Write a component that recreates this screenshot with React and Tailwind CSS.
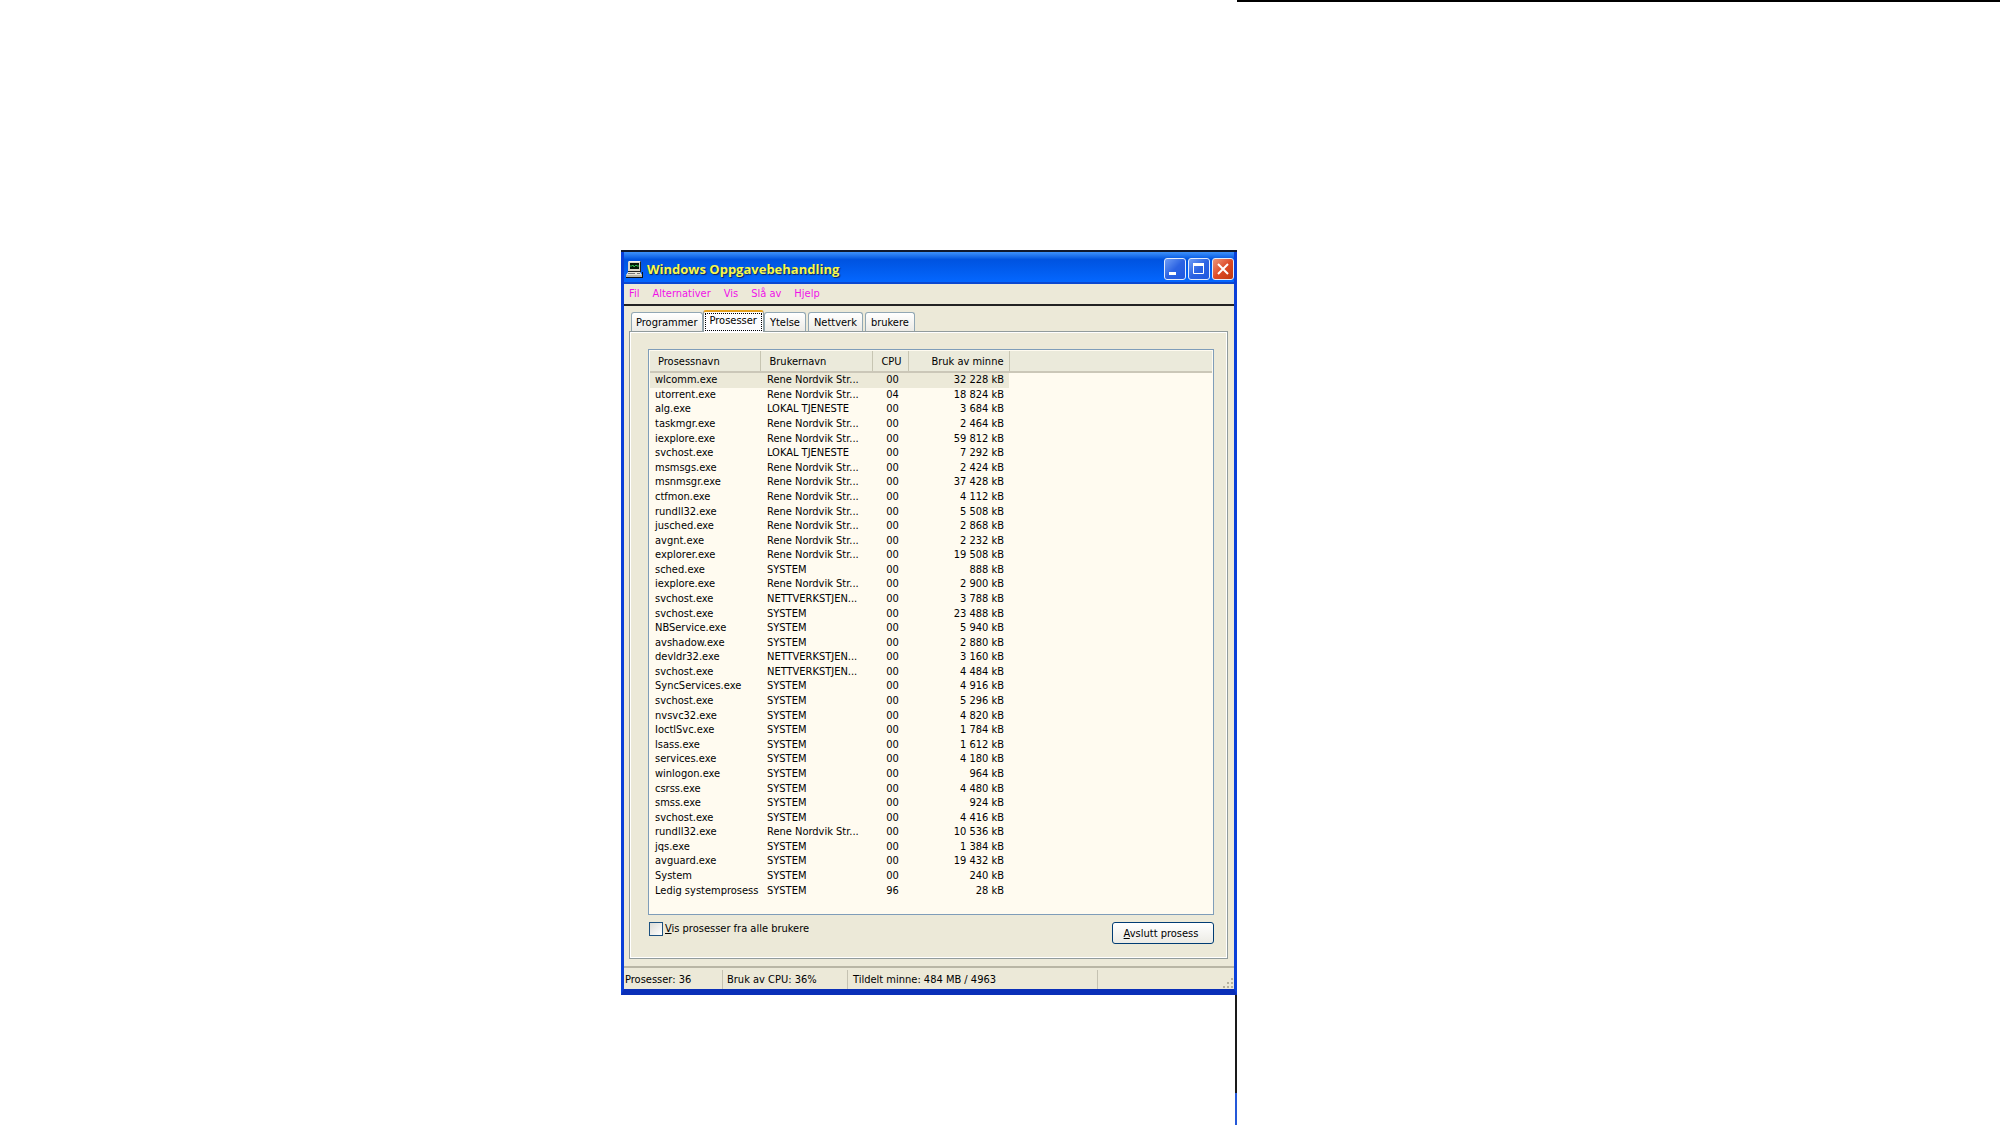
import { useState } from 'react';
import clsx from 'clsx';

const USER = 'Rene Nordvik Str...';
const NETWORK = 'NETTVERKSTJEN...';

const processes = [
  ['wlcomm.exe', USER, '00', '32 228 kB'],
  ['utorrent.exe', USER, '04', '18 824 kB'],
  ['alg.exe', 'LOKAL TJENESTE', '00', '3 684 kB'],
  ['taskmgr.exe', USER, '00', '2 464 kB'],
  ['iexplore.exe', USER, '00', '59 812 kB'],
  ['svchost.exe', 'LOKAL TJENESTE', '00', '7 292 kB'],
  ['msmsgs.exe', USER, '00', '2 424 kB'],
  ['msnmsgr.exe', USER, '00', '37 428 kB'],
  ['ctfmon.exe', USER, '00', '4 112 kB'],
  ['rundll32.exe', USER, '00', '5 508 kB'],
  ['jusched.exe', USER, '00', '2 868 kB'],
  ['avgnt.exe', USER, '00', '2 232 kB'],
  ['explorer.exe', USER, '00', '19 508 kB'],
  ['sched.exe', 'SYSTEM', '00', '888 kB'],
  ['iexplore.exe', USER, '00', '2 900 kB'],
  ['svchost.exe', NETWORK, '00', '3 788 kB'],
  ['svchost.exe', 'SYSTEM', '00', '23 488 kB'],
  ['NBService.exe', 'SYSTEM', '00', '5 940 kB'],
  ['avshadow.exe', 'SYSTEM', '00', '2 880 kB'],
  ['devldr32.exe', NETWORK, '00', '3 160 kB'],
  ['svchost.exe', NETWORK, '00', '4 484 kB'],
  ['SyncServices.exe', 'SYSTEM', '00', '4 916 kB'],
  ['svchost.exe', 'SYSTEM', '00', '5 296 kB'],
  ['nvsvc32.exe', 'SYSTEM', '00', '4 820 kB'],
  ['IoctlSvc.exe', 'SYSTEM', '00', '1 784 kB'],
  ['lsass.exe', 'SYSTEM', '00', '1 612 kB'],
  ['services.exe', 'SYSTEM', '00', '4 180 kB'],
  ['winlogon.exe', 'SYSTEM', '00', '964 kB'],
  ['csrss.exe', 'SYSTEM', '00', '4 480 kB'],
  ['smss.exe', 'SYSTEM', '00', '924 kB'],
  ['svchost.exe', 'SYSTEM', '00', '4 416 kB'],
  ['rundll32.exe', USER, '00', '10 536 kB'],
  ['jqs.exe', 'SYSTEM', '00', '1 384 kB'],
  ['avguard.exe', 'SYSTEM', '00', '19 432 kB'],
  ['System', 'SYSTEM', '00', '240 kB'],
  ['Ledig systemprosess', 'SYSTEM', '96', '28 kB'],
];

const menus = ['Fil', 'Alternativer', 'Vis', 'Slå av', 'Hjelp'];
const tabs = ['Programmer', 'Prosesser', 'Ytelse', 'Nettverk', 'brukere'];

function ComputerIcon() {
  return (
    <svg width="17" height="17" viewBox="0 0 17 17" aria-hidden="true">
      <path d="M2 1l1-1h12l-1 1z" fill="#f4f2ea" />
      <path d="M2 1h12v10H2z" fill="#d8d5c8" />
      <path d="M14 1l1-1v11h-1zM2 10h13v1H2z" fill="#222" />
      <path d="M4 2h9v6H4z" fill="#04170a" />
      <path d="M4 5h2l1-1 1 2 2-2 1 1h2" fill="none" stroke="#2fc04c" />
      <path d="M2 11h12l2 3H0z" fill="#e8e5da" />
      <path d="M0 14h16v2H0z" fill="#b9b6a8" />
      <path d="M16 11v5H0v1h17v-6z" fill="#111" />
      <path d="M2 12.500h7M11 12.500h3" stroke="#777" />
    </svg>
  );
}

function TitleButton({ label, red, children }) {
  return (
    <button
      type="button"
      aria-label={label}
      className={clsx(
        'h-[22px] w-[22px] rounded-[3px] border border-[#e4ecfb]',
        red
          ? 'bg-linear-to-br from-[#ec9478] via-[#dd4a26] to-[#c03a10]'
          : 'bg-linear-to-br from-[#6f9cf5] via-[#2c63e2] to-[#1e57e0]'
      )}
    >
      <svg width="20" height="20" viewBox="0 0 20 20" fill="none" stroke="#fff">
        {children}
      </svg>
    </button>
  );
}

function TitleBar() {
  return (
    <div className="flex h-8 items-center bg-linear-to-b from-[#3c91fb] via-[#0053e0] via-25% to-[#0467ff] border-b-2 border-[#0b48d0] pt-1 pl-[2px]">
      <ComputerIcon />
      <h1 className="ml-1 flex-1 font-['Open_Sans','Noto_Sans',sans-serif] text-[13px] font-bold leading-4 text-[#f6f84c] [text-shadow:1px_1px_1px_#10205c]">
        Windows Oppgavebehandling
      </h1>
      <div className="flex gap-[2px]">
        <TitleButton label="Minimer">
          <path d="M4 14.500h7" strokeWidth="3" />
        </TitleButton>
        <TitleButton label="Maksimer">
          <path d="M4.500 5.500h10v9h-10z" />
          <path d="M4 5.500h11" strokeWidth="3" />
        </TitleButton>
        <TitleButton label="Lukk" red>
          <path d="M5 5l10 10M15 5L5 15" strokeWidth="2" />
        </TitleButton>
      </div>
    </div>
  );
}

function Tabs({ active, onChange }) {
  return (
    <div role="tablist" className="flex h-[21px] items-end pl-[2px]">
      {tabs.map((tab) => (
        <button
          key={tab}
          type="button"
          role="tab"
          aria-selected={tab === active}
          onClick={() => onChange(tab)}
          className={clsx(
            'rounded-t-[3px] border border-b-0 whitespace-nowrap',
            tab === active
              ? 'z-10 -mb-px h-[22px] border-t-2 border-[#919b9c] border-t-[#e5a01c] bg-[#fcfcfe] p-px'
              : 'mr-[2px] h-[19px] border-[#91a7b4] bg-linear-to-b from-white to-[#ecebe6] px-[5px] pt-[2px] first:mr-0 first:px-1'
          )}
        >
          <span className={clsx('block', tab === active && 'h-full border border-dotted border-black px-1')}>
            {tab}
          </span>
        </button>
      ))}
    </div>
  );
}

function ProcessTable() {
  return (
    <div className="h-[566px] border border-[#7f9db9] bg-[#fffbf0] p-px">
      <table className="h-[547px] w-full table-fixed border-collapse text-left">
        <colgroup>
          <col className="w-[110px]" />
          <col className="w-[112px]" />
          <col className="w-[36px]" />
          <col className="w-[101px]" />
          <col />
        </colgroup>
        <thead>
          <tr className="h-[21px] border-b-2 border-[#cbc7b8] bg-[#ebeadb] [&>th]:pt-[2px]">
            <th className="border-r border-[#c7c5b2] p-0 pl-2 font-normal">Prosessnavn</th>
            <th className="border-r border-[#c7c5b2] p-0 pl-[9px] font-normal">Brukernavn</th>
            <th className="border-r border-[#c7c5b2] p-0 pl-[3px] text-center font-normal">CPU</th>
            <th className="border-r border-[#c7c5b2] p-0 pr-[5px] text-right font-normal">Bruk av minne</th>
            <td className="p-0" />
          </tr>
        </thead>
        <tbody>
          {processes.map(([name, user, cpu, memory], i) => (
            <tr key={i} className="first:[&>td:not(:last-child)]:bg-[#ece9d8]">
              <td className="p-0 pl-[5px] whitespace-nowrap">{name}</td>
              <td className="p-0 pl-[7px] whitespace-nowrap">{user}</td>
              <td className="p-0 pl-[5px] text-center">{cpu}</td>
              <td className="p-0 pr-[5px] text-right">{memory}</td>
              <td className="p-0" />
            </tr>
          ))}
        </tbody>
      </table>
    </div>
  );
}

function StatusBar() {
  return (
    <footer className="mt-[7px] flex h-[23px] items-stretch border-t-2 border-[#b9b6a5] bg-[#ece9d8] pt-[2px] leading-5">
      <div className="w-[99px] border-r border-[#c5c2b2] pl-px">Prosesser: 36</div>
      <div className="w-[125px] border-r border-[#c5c2b2] pl-1">Bruk av CPU: 36%</div>
      <div className="w-[250px] border-r border-[#c5c2b2] pl-[5px]">Tildelt minne: 484 MB / 4963</div>
      <svg className="mt-auto ml-auto" width="12" height="12" viewBox="0 0 12 12" fill="#b5b19e">
        <path d="M9 1h2v2H9zM5 5h2v2H5zM9 5h2v2H9zM1 9h2v2H1zM5 9h2v2H5zM9 9h2v2H9z" />
      </svg>
    </footer>
  );
}

function App() {
  const [activeTab, setActiveTab] = useState('Prosesser');
  const [showAll, setShowAll] = useState(false);

  return (
    <div className="grid min-h-screen grid-cols-[621fr_616fr_763fr] bg-white font-['DejaVu_Sans_Condensed','DejaVu_Sans',sans-serif] text-[11px] leading-[14px] text-black">
      <div />
      <div className="flex flex-col pt-[250px]">
        <main className="border-t-2 border-[#10182c]">
          <div className="border-x-3 border-b-6 border-x-[#0a3fd8] border-b-[#0a2fb8] bg-[#ece9d8]">
            <TitleBar />
            <nav className="flex h-[22px] gap-[13px] border-b-2 border-[#222] bg-[#ece9d8] pt-[3px] pl-[5px] text-[#f012e8]">
              {menus.map((menu) => (
                <button key={menu} type="button" className="h-[14px]">
                  {menu}
                </button>
              ))}
            </nav>
            <div className="pt-1 pr-[6px] pl-[5px]">
              <Tabs active={activeTab} onChange={setActiveTab} />
              <section className="border border-[#919b9c] px-[13px] pt-[17px] pb-[14px] pl-[18px] shadow-[inset_1px_1px_#fff,inset_-1px_-1px_#fff]">
                <ProcessTable />
                <div className="flex items-start justify-between pt-[7px] pl-px">
                  <label className="flex items-center gap-[2px]">
                    <input
                      type="checkbox"
                      checked={showAll}
                      onChange={(e) => setShowAll(e.target.checked)}
                      className="h-[14px] w-[14px] appearance-none border border-[#1c5180] bg-linear-to-br from-[#dcdcd7] to-white checked:bg-[#21a121]"
                    />
                    <span>
                      <u>V</u>is prosesser fra alle brukere
                    </span>
                  </label>
                  <button
                    type="button"
                    className="h-[22px] w-[102px] rounded-[3px] border border-[#003c74] bg-linear-to-b from-white to-[#ecebe5] pt-px pr-1"
                  >
                    <u>A</u>vslutt prosess
                  </button>
                </div>
              </section>
            </div>
            <StatusBar />
          </div>
        </main>
        <div className="flex w-[2px] flex-1 flex-col self-end">
          <div className="flex-1 bg-[#1a1a1a]" />
          <div className="h-8 bg-[#2458d8]" />
        </div>
      </div>
      <div className="h-[2px] bg-black" />
    </div>
  );
}

export default App;
